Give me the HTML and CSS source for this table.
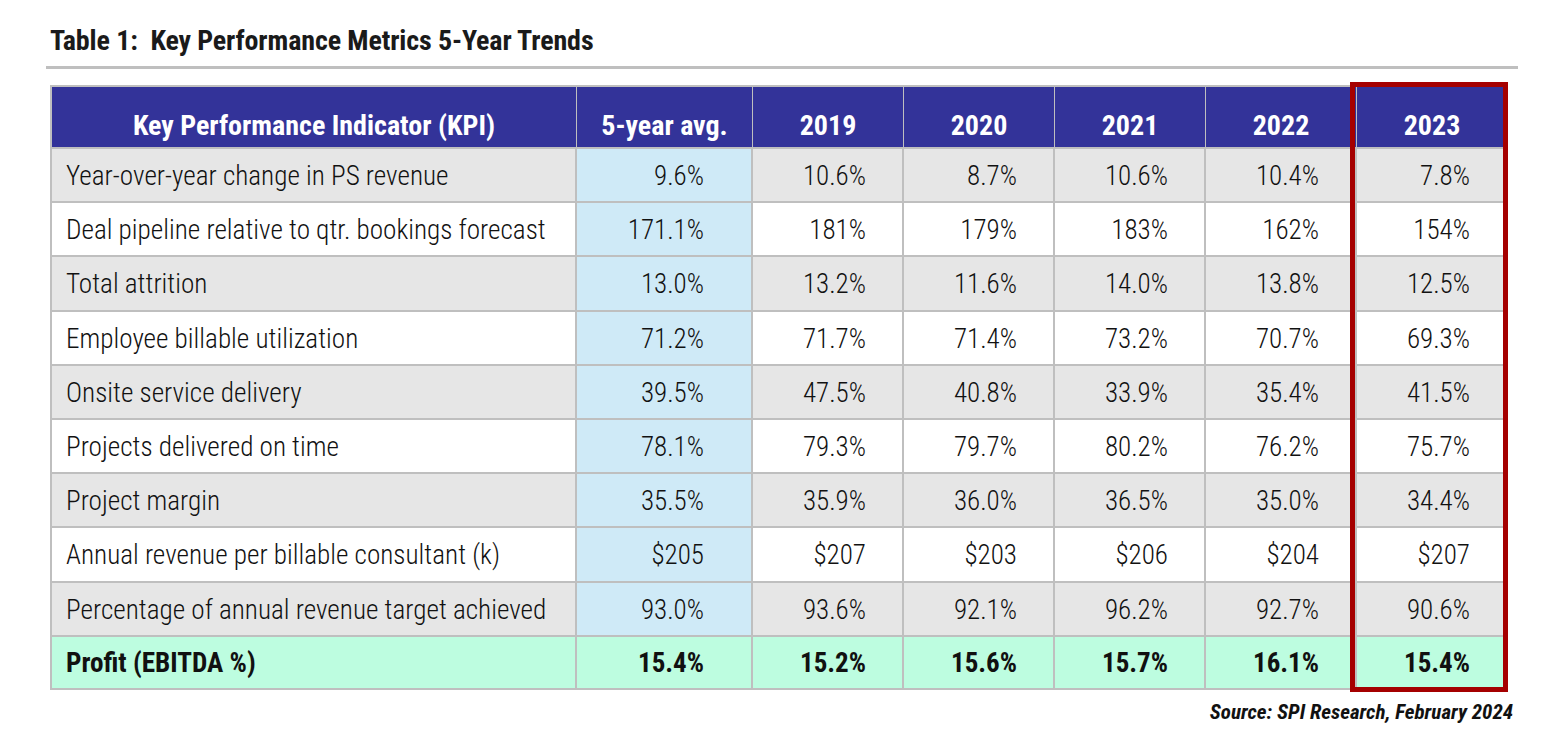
FILE: index.html
```html
<!DOCTYPE html>
<html lang="en">
<head>
<meta charset="utf-8">
<title>Key Performance Metrics 5-Year Trends</title>
<link rel="stylesheet" href="styles.css">
</head>
<body>
<div class="page">
  <h1 class="title">Table 1:&nbsp; Key Performance Metrics 5-Year Trends</h1>
  <div class="rule"></div>
  <div class="table-wrap">
    <table class="kpi">
      <colgroup>
        <col class="c-kpi"><col class="c-avg"><col class="c-yr"><col class="c-yr"><col class="c-yr"><col class="c-yr"><col class="c-yr">
      </colgroup>
      <thead>
        <tr>
          <th>Key Performance Indicator (KPI)</th>
          <th>5-year avg.</th>
          <th>2019</th>
          <th>2020</th>
          <th>2021</th>
          <th>2022</th>
          <th>2023</th>
        </tr>
      </thead>
      <tbody>
        <tr class="shade">
          <td class="label">Year-over-year change in PS revenue</td>
          <td class="avg">9.6%</td><td>10.6%</td><td>8.7%</td><td>10.6%</td><td>10.4%</td><td>7.8%</td>
        </tr>
        <tr>
          <td class="label">Deal pipeline relative to qtr. bookings forecast</td>
          <td class="avg">171.1%</td><td>181%</td><td>179%</td><td>183%</td><td>162%</td><td>154%</td>
        </tr>
        <tr class="shade">
          <td class="label">Total attrition</td>
          <td class="avg">13.0%</td><td>13.2%</td><td>11.6%</td><td>14.0%</td><td>13.8%</td><td>12.5%</td>
        </tr>
        <tr>
          <td class="label">Employee billable utilization</td>
          <td class="avg">71.2%</td><td>71.7%</td><td>71.4%</td><td>73.2%</td><td>70.7%</td><td>69.3%</td>
        </tr>
        <tr class="shade">
          <td class="label">Onsite service delivery</td>
          <td class="avg">39.5%</td><td>47.5%</td><td>40.8%</td><td>33.9%</td><td>35.4%</td><td>41.5%</td>
        </tr>
        <tr>
          <td class="label">Projects delivered on time</td>
          <td class="avg">78.1%</td><td>79.3%</td><td>79.7%</td><td>80.2%</td><td>76.2%</td><td>75.7%</td>
        </tr>
        <tr class="shade">
          <td class="label">Project margin</td>
          <td class="avg">35.5%</td><td>35.9%</td><td>36.0%</td><td>36.5%</td><td>35.0%</td><td>34.4%</td>
        </tr>
        <tr>
          <td class="label">Annual revenue per billable consultant (k)</td>
          <td class="avg">$205</td><td>$207</td><td>$203</td><td>$206</td><td>$204</td><td>$207</td>
        </tr>
        <tr class="shade">
          <td class="label">Percentage of annual revenue target achieved</td>
          <td class="avg">93.0%</td><td>93.6%</td><td>92.1%</td><td>96.2%</td><td>92.7%</td><td>90.6%</td>
        </tr>
        <tr class="profit">
          <td class="label">Profit (EBITDA %)</td>
          <td class="avg">15.4%</td><td>15.2%</td><td>15.6%</td><td>15.7%</td><td>16.1%</td><td>15.4%</td>
        </tr>
      </tbody>
    </table>
    <div class="highlight"></div>
  </div>
  <p class="source">Source: SPI Research, February 2024</p>
</div>
</body>
</html>
```
FILE: styles.css
```css
* { box-sizing: border-box; }
html, body { margin: 0; padding: 0; background: #ffffff; }
body {
  font-family: "Roboto Condensed", "Roboto", "Liberation Sans", sans-serif;
  color: #111111;
}
.page {
  width: 1472px;
  margin-left: 46px;
  padding-top: 24px;
}
.title {
  margin: 0;
  padding-left: 4px;
  font-size: 28px;
  line-height: 34px;
  font-weight: 700;
  color: #1a1a1a;
  letter-spacing: -0.12px;
  white-space: nowrap;
}
.rule {
  height: 3px;
  background: #bfbfbf;
  margin-top: 8px;
}
.table-wrap {
  position: relative;
  margin-top: 16px;
  margin-left: 4px;
  width: 1456px;
}
.kpi {
  table-layout: fixed;
  width: 1456px;
  border-collapse: separate;
  border-spacing: 0;
  border-top: 2px solid #bfbfbf;
  border-left: 2px solid #bfbfbf;
}
.c-kpi { width: 525px; }
.c-avg { width: 176px; }
.c-yr { width: 151px; }
.kpi th, .kpi td {
  border-right: 2px solid #bfbfbf;
  border-bottom: 2px solid #bfbfbf;
  padding: 0;
  white-space: nowrap;
  vertical-align: middle;
}
.kpi th {
  background: #333399;
  color: #ffffff;
  font-weight: 700;
  font-size: 28px;
  height: 62px;
  padding-top: 16px;
  text-align: center;
  border-right-width: 1px;
}
.kpi td {
  font-size: 27px;
  font-weight: 300;
  height: 54.2px;
  padding-top: 2px;
  text-align: right;
  padding-right: 36px;
  color: #111111;
  background: #ffffff;
}
.kpi tr.shade td { background: #e6e6e6; }
.kpi td.label {
  text-align: left;
  padding-left: 14px;
  padding-right: 0;
  font-size: 27.2px;
}
.kpi td.avg {
  background: #cfeaf7;
  padding-right: 47px;
}
.kpi tr.shade td.avg { background: #cfeaf7; }
.kpi tr.profit td,
.kpi tr.profit td.avg {
  background: #bdfde0;
  font-weight: 700;
  height: 53px;
}
.highlight {
  position: absolute;
  left: 1300px;
  top: -3px;
  width: 158px;
  height: 610px;
  border: 5px solid #a50000;
  pointer-events: none;
}
.source {
  margin: 10px 5px 0 0;
  text-align: right;
  font-size: 21px;
  line-height: 24px;
  font-weight: 700;
  font-style: italic;
  color: #111111;
}
```
